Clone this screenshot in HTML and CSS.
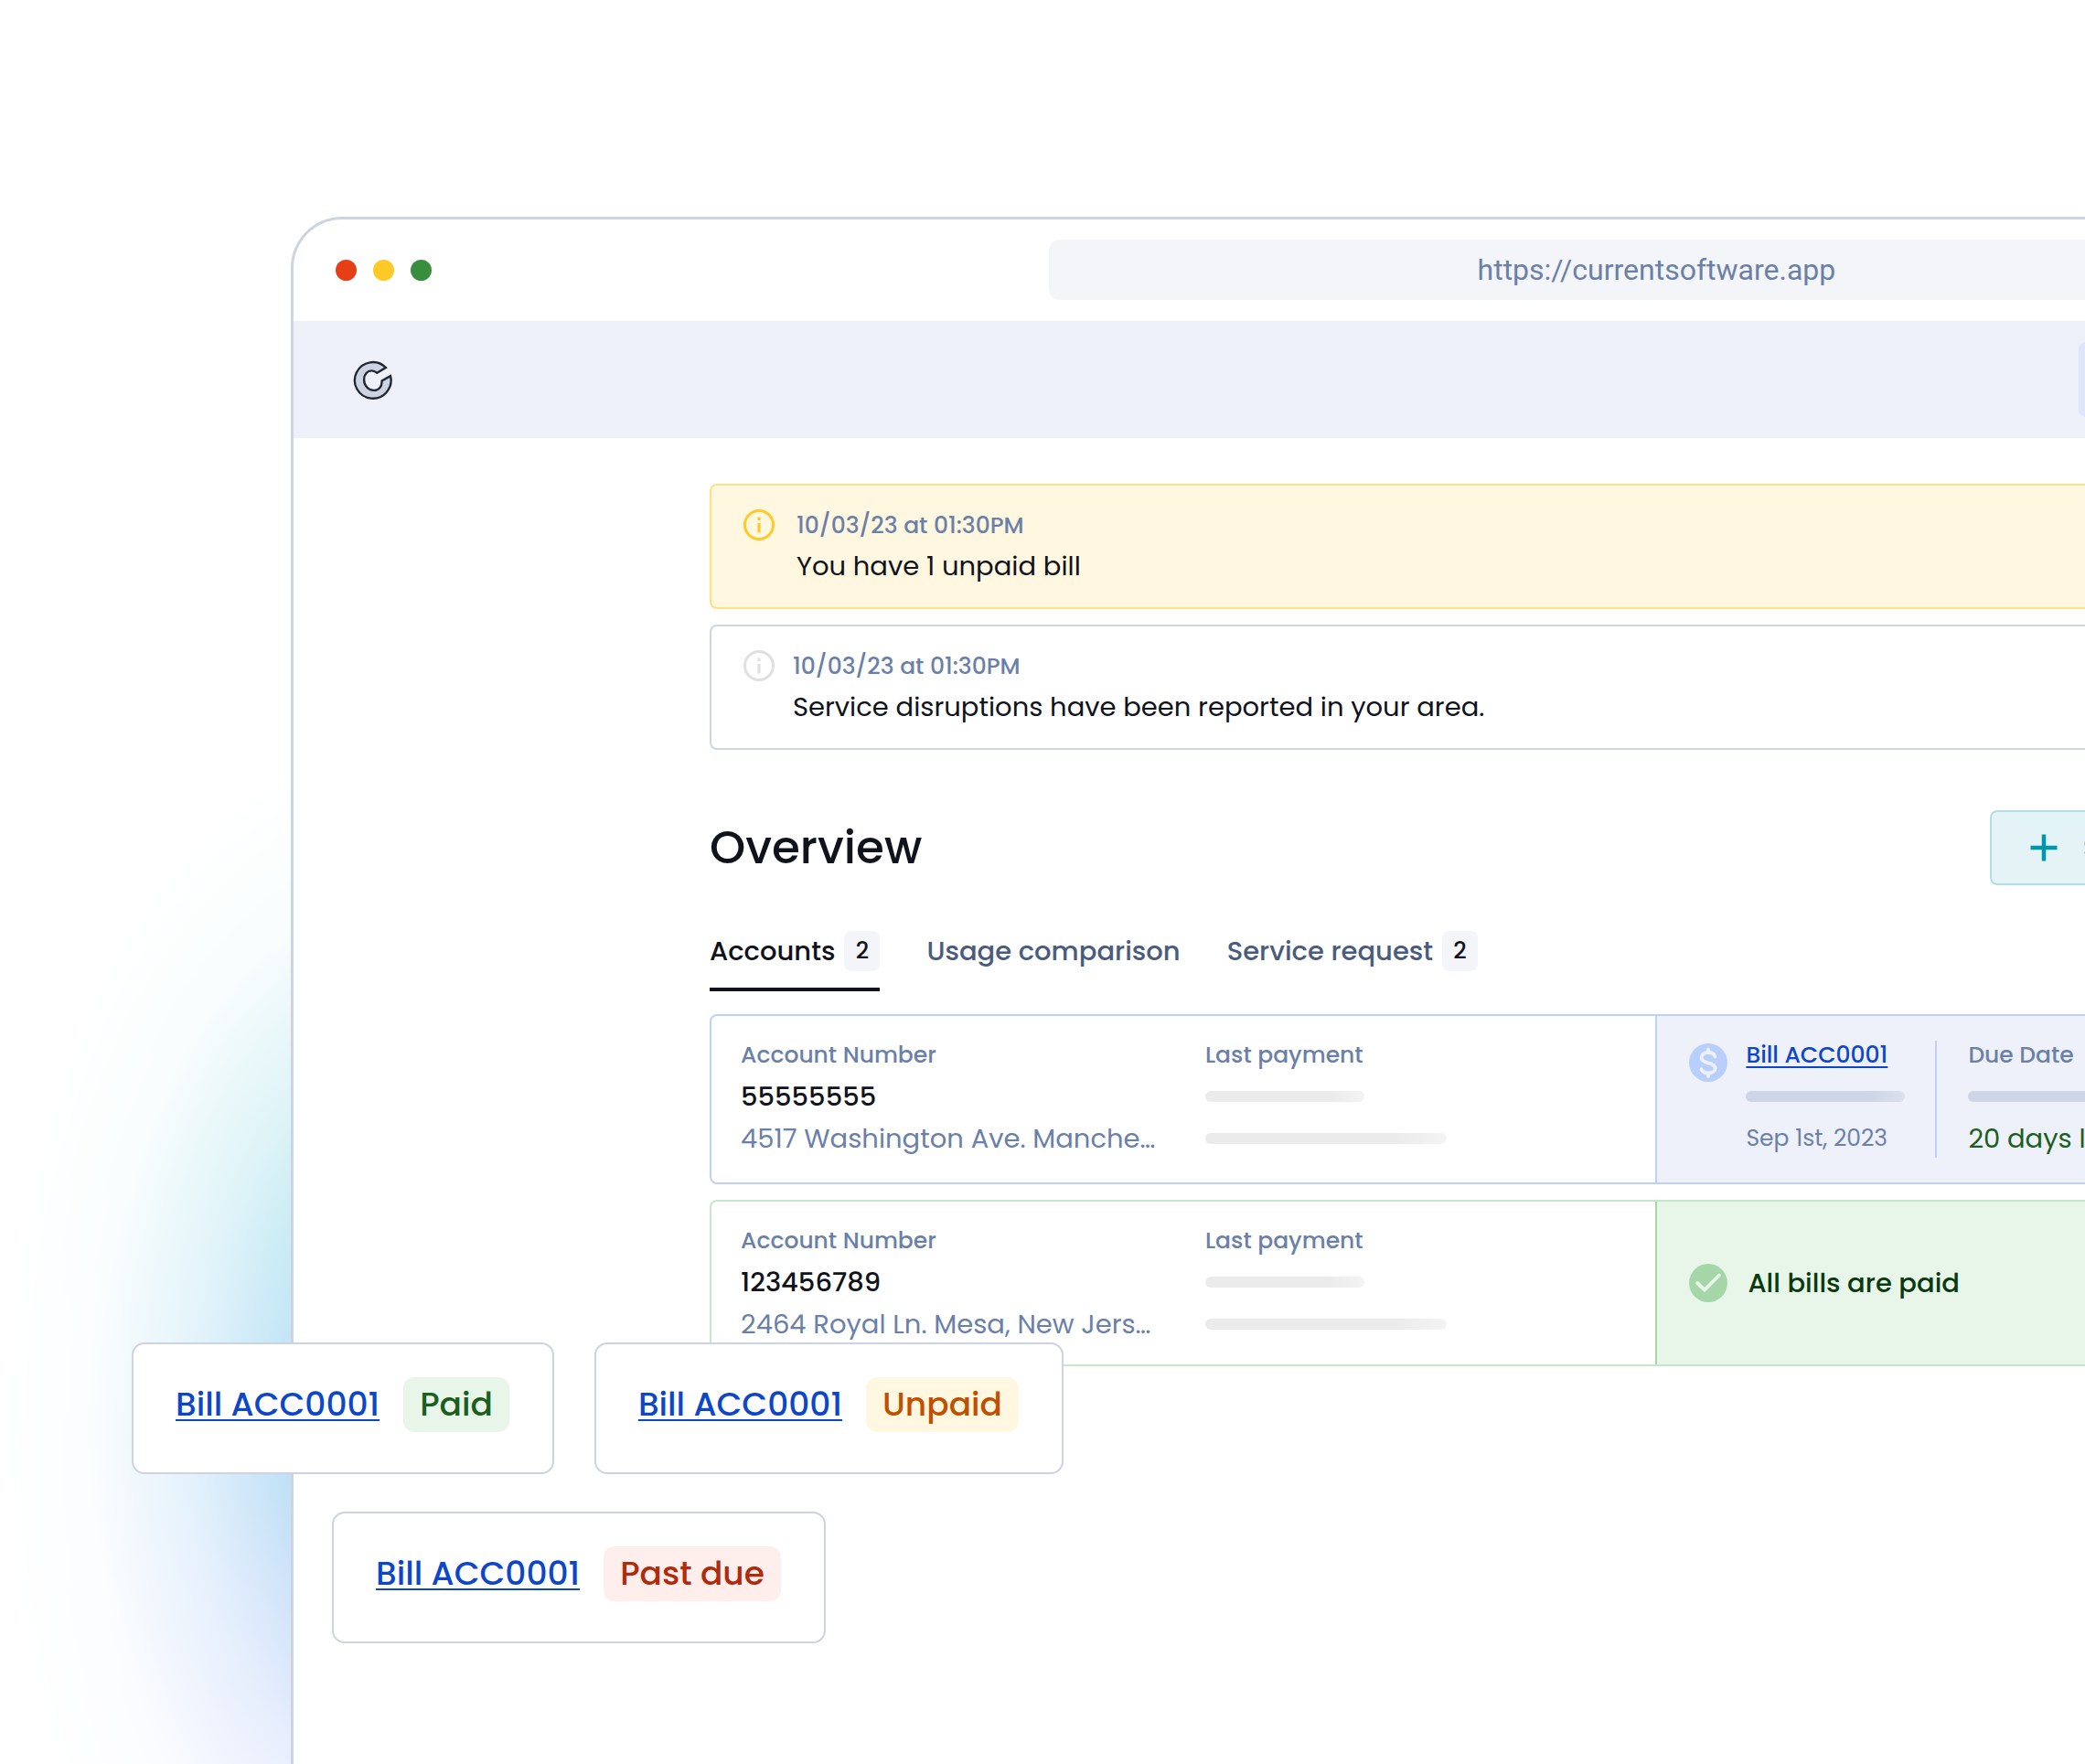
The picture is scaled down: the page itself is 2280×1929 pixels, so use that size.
FILE: index.html
```html
<!DOCTYPE html>
<html lang="en">
<head>
<meta charset="utf-8">
<meta name="viewport" content="width=device-width, initial-scale=1">
<title>Current – Overview</title>
<link rel="stylesheet" href="styles.css">
</head>
<body>
<div class="stage">
  <div class="glow"></div>

  <div class="window">
    <div class="chrome">
      <div class="dots">
        <span class="dot dot-red"></span>
        <span class="dot dot-yellow"></span>
        <span class="dot dot-green"></span>
      </div>
      <input class="address" type="text" value="https://currentsoftware.app" aria-label="Address" readonly>
    </div>

    <nav class="nav">
      <a class="logo" href="#" aria-label="Home">
        <svg viewBox="-3 -3 128 128" width="43" height="43" aria-hidden="true">
          <path d="M104 21A59 59 0 1 0 119 48L91 64C92 84 80 95 65 95C47 95 33 80 33 60C33 42 44 31 58 31C65 31 70 34 75 38Z" fill="#cdd3e0" stroke="#1f2733" stroke-width="7"/>
        </svg>
      </a>
      <div class="nav-actions"><button class="nav-button" type="button" aria-label="Menu"></button></div>
    </nav>

    <main class="content">
      <section class="alerts">
        <article class="alert alert-warning">
          <svg class="alert-icon" viewBox="0 0 34 34" aria-hidden="true"><circle cx="17" cy="17" r="15.5" fill="none" stroke="currentColor" stroke-width="3"/><path d="M17 15v10.500M17 8.500v3.500" stroke="currentColor" stroke-width="3.200"/></svg>
          <div>
            <p class="alert-date">10/03/23 at 01:30PM</p>
            <p class="alert-text">You have 1 unpaid bill</p>
          </div>
        </article>
        <article class="alert alert-info">
          <svg class="alert-icon" viewBox="0 0 34 34" aria-hidden="true"><circle cx="17" cy="17" r="15.5" fill="none" stroke="currentColor" stroke-width="3"/><path d="M17 15v10.500M17 8.500v3.500" stroke="currentColor" stroke-width="3.200"/></svg>
          <div>
            <p class="alert-date">10/03/23 at 01:30PM</p>
            <p class="alert-text">Service disruptions have been reported in your area.</p>
          </div>
        </article>
      </section>

      <header class="heading">
        <h1>Overview</h1>
        <div class="heading-actions">
          <button class="start" type="button">
            <svg viewBox="0 0 30 30" width="30" height="30" aria-hidden="true"><path d="M15 0.500v29M0.500 15h29" stroke="currentColor" stroke-width="4.500"/></svg>
            Start service
          </button>
        </div>
      </header>

      <div class="tabs" role="tablist">
        <button class="tab tab-active" type="button" role="tab" aria-selected="true">Accounts <span class="count">2</span></button>
        <button class="tab" type="button" role="tab" aria-selected="false">Usage comparison</button>
        <button class="tab" type="button" role="tab" aria-selected="false">Service request <span class="count">2</span></button>
      </div>

      <section class="accounts">
        <article class="account account-due">
          <div class="account-main">
            <div class="lines">
              <p class="label">Account Number</p>
              <p class="number">55555555</p>
              <p class="street">4517 Washington Ave. Manche…</p>
            </div>
            <div class="lines">
              <p class="label">Last payment</p>
              <div class="slot"><span class="bar bar-short"></span></div>
              <div class="slot"><span class="bar bar-long"></span></div>
            </div>
          </div>
          <div class="bill">
            <svg class="bill-icon" viewBox="0 0 42 42" aria-hidden="true"><circle cx="21" cy="21" r="21" fill="#b8cefb"/><path d="M28.500 14.500C27.500 11.500 24.500 10 21 10C16.500 10 13.500 12.300 13.500 15.500C13.500 19 16.500 20.300 21 21.300C26 22.400 28.700 24 28.700 27.200C28.700 30.300 25.500 32.300 21 32.300C17.500 32.300 14.500 31 13.500 28.300M21 6.500v3M21 33v3" fill="none" stroke="#eef1f9" stroke-width="3.800" stroke-linecap="round"/></svg>
            <div class="lines bill-ref">
              <p class="label"><a class="link" href="#">Bill ACC0001</a></p>
              <div class="slot"><span class="bar bar-short bar-blue"></span></div>
              <p class="date">Sep 1st, 2023</p>
            </div>
            <div class="divider"></div>
            <div class="lines">
              <p class="label">Due Date</p>
              <div class="slot"><span class="bar bar-long bar-blue"></span></div>
              <p class="left">20 days left</p>
            </div>
          </div>
        </article>

        <article class="account account-paid">
          <div class="account-main">
            <div class="lines">
              <p class="label">Account Number</p>
              <p class="number">123456789</p>
              <p class="street">2464 Royal Ln. Mesa, New Jers…</p>
            </div>
            <div class="lines">
              <p class="label">Last payment</p>
              <div class="slot"><span class="bar bar-short"></span></div>
              <div class="slot"><span class="bar bar-long"></span></div>
            </div>
          </div>
          <div class="bill">
            <svg class="bill-icon" viewBox="0 0 42 42" aria-hidden="true"><circle cx="21" cy="21" r="21" fill="#a5d6a7"/><path d="M9 21L17 28.500L33 12.500" fill="none" stroke="#e8f5e9" stroke-width="3.800" stroke-linecap="round" stroke-linejoin="miter"/></svg>
            <p class="all-paid">All bills are paid</p>
          </div>
        </article>
      </section>
    </main>
  </div>

  <div class="statuses">
    <div class="status-row">
      <div class="status"><a class="link" href="#">Bill ACC0001</a><span class="pill pill-paid">Paid</span></div>
      <div class="status"><a class="link" href="#">Bill ACC0001</a><span class="pill pill-unpaid">Unpaid</span></div>
    </div>
    <div class="status-row status-row-indent">
      <div class="status"><a class="link" href="#">Bill ACC0001</a><span class="pill pill-late">Past due</span></div>
    </div>
  </div>
</div>
</body>
</html>
```
FILE: styles.css
```css
* {
  box-sizing: border-box;
}

body {
  margin: 0;
  background: #fff;
  color: #10131c;
  font-family: Poppins, Inter, "Liberation Sans", sans-serif;
  font-size: 29px;
}

h1,
p {
  margin: 0;
}

button {
  border: 0;
  background: none;
  padding: 0;
  color: inherit;
  font: inherit;
}

.stage {
  position: relative;
  display: flex;
  min-height: 100vh;
  padding: 237px 0 0 318px;
  overflow: hidden;
}

/* Soft colour wash behind the window's left edge */
.glow {
  position: absolute;
  left: 0;
  top: 800px;
  width: 880px;
  height: 1520px;
  background: linear-gradient(#8ad6e0 20%, #94dae7 32%, #a4d9f1 42%, #a4d2f3 54%, #aecff6 62%, #b0c6f8 72%);
  mask-image: radial-gradient(closest-side, rgba(0, 0, 0, 0.95) 0%, rgba(0, 0, 0, 0.7) 28%, rgba(0, 0, 0, 0.3) 53%, rgba(0, 0, 0, 0.05) 77%, transparent 100%);
}

.window {
  position: relative;
  flex: none;
  width: 131vw;
  border: 3px solid #cdd3e2;
  border-bottom: 0;
  border-radius: 56px 56px 0 0;
  background: #fff;
  overflow: hidden;
}

.chrome {
  display: grid;
  grid-template-columns: 1fr 46% 1fr;
  align-items: center;
  height: 111px;
  padding: 0 46px;
}

.dots {
  display: flex;
  gap: 18px;
}

.dot {
  width: 23px;
  height: 23px;
  border-radius: 50%;
}

.dot-red {
  background: #e63f17;
}

.dot-yellow {
  background: #ffca28;
}

.dot-green {
  background: #388e3c;
}

.address {
  width: 100%;
  height: 66px;
  margin: 0 0 2px;
  border: 0;
  border-radius: 12px;
  background: #f3f5f9;
  color: #6b80a8;
  font-family: Roboto, sans-serif;
  font-size: 32px;
  text-align: center;
}

.nav {
  display: flex;
  align-items: center;
  justify-content: space-between;
  height: 128px;
  padding-left: 65px;
  background: #eef1f9;
}

.logo {
  display: flex;
}

.nav-actions {
  width: 1029px;
}

.nav-button {
  display: block;
  width: 82px;
  height: 82px;
  border-radius: 8px;
  background: #dfe5fa;
}

.content {
  padding: 50px 457px 0 455px;
}

.alerts,
.accounts {
  display: flex;
  flex-direction: column;
  gap: 17px;
}

.alert {
  display: flex;
  gap: 24px;
  padding: 21px 35px 22px;
  border: 2px solid #cdd5e3;
  border-radius: 8px;
  line-height: 45px;
}

.alert-warning {
  border-color: #ffe082;
  background: #fff7df;
}

.alert-info {
  gap: 20px;
}

.alert-icon {
  width: 34px;
  height: 34px;
  margin-top: 5px;
  color: #ffca28;
}

.alert-info .alert-icon {
  color: #e0e0e0;
}

.alert-date {
  color: #6b80a8;
  font-size: 25px;
  font-weight: 500;
}

.heading {
  display: flex;
  align-items: center;
  justify-content: space-between;
  margin-top: 66px;
}

h1 {
  font-size: 50px;
  font-weight: 500;
  line-height: 82px;
}

.heading-actions {
  width: 669px;
}

.start {
  display: flex;
  align-items: center;
  gap: 28px;
  height: 82px;
  padding: 0 42px;
  border: 2px solid #b2dfe6;
  border-radius: 8px;
  background: #e3f3f6;
  color: #0097ab;
  font-weight: 500;
}

.tabs {
  display: flex;
  gap: 51px;
  margin-top: 50px;
}

.tab {
  display: flex;
  align-items: center;
  gap: 10px;
  height: 66px;
  padding-bottom: 18px;
  border-bottom: 4px solid transparent;
  color: #4a5c7e;
  font-weight: 500;
}

.tab-active {
  border-color: #10131c;
  color: #10131c;
}

.count {
  width: 39px;
  border-radius: 8px;
  background: #f3f5f9;
  color: #10131c;
  font-size: 25px;
  line-height: 44px;
}

.accounts {
  margin-top: 25px;
}

.account {
  display: grid;
  grid-template-columns: 1fr 1fr;
  border: 2px solid #bdd1fa;
  border-radius: 8px;
  overflow: hidden;
}

.account-main {
  display: grid;
  grid-template-columns: minmax(0, 508px) 1fr;
  padding: 20px 0 25px 32px;
}

.lines {
  line-height: 46px;
}

.label {
  color: #6b80a8;
  font-size: 25px;
  font-weight: 500;
  line-height: 45px;
}

.number {
  font-weight: 500;
}

.street {
  color: #6b80a8;
}

.slot {
  display: flex;
  align-items: center;
  height: 46px;
}

.bar {
  height: 12px;
  border-radius: 6px;
  background: linear-gradient(90deg, #ebebeb 78%, #f4f4f4);
}

.bar-short {
  width: 174px;
}

.bar-long {
  width: 264px;
}

.bar-blue {
  background: linear-gradient(90deg, #cdd5e6 78%, #dbe1ec);
}

.bill {
  display: flex;
  padding: 20px 0 25px 35px;
  border-left: 2px solid #bdd1fa;
  background: #eef1f9;
}

.bill-icon {
  flex: none;
  width: 42px;
  height: 42px;
  margin: 10px 20px 0 0;
}

.link {
  color: #0d47c8;
  font-weight: 500;
  text-decoration-thickness: 2px;
  text-underline-offset: 4px;
}

.bill-ref {
  width: 207px;
}

.date {
  color: #6b80a8;
  font-size: 25px;
}

.divider {
  width: 2px;
  margin: 7px 34px 2px 0;
  background: #bdd1fa;
}

.left {
  color: #1b5e20;
}

.account-paid {
  border-color: #c8e6c9;
}

.account-paid .account-main {
  padding-bottom: 21px;
}

.account-paid .bill {
  align-items: center;
  padding-block: 0;
  border-color: #a5d6a7;
  background: #e8f5e9;
}

.account-paid .bill-icon {
  margin-top: 0;
  margin-right: 22px;
}

.all-paid {
  color: #0a3a10;
  font-weight: 500;
}

/* Status cards float over the window */
.statuses {
  position: absolute;
  left: 144px;
  top: 1468px;
  display: flex;
  flex-direction: column;
  gap: 41px;
}

.status-row {
  display: flex;
  gap: 44px;
}

.status-row-indent {
  padding-left: 219px;
}

.status {
  display: flex;
  gap: 26px;
  padding: 36px 47px 44px 46px;
  border: 2px solid #cdd3e2;
  border-radius: 14px;
  background: #fff;
  font-size: 36px;
  line-height: 60px;
}

.pill {
  padding: 0 18px;
  border-radius: 12px;
  font-weight: 500;
}

.pill-paid {
  background: #e8f5e9;
  color: #1b5e20;
}

.pill-unpaid {
  background: #fff7df;
  color: #bf5000;
}

.pill-late {
  background: #feeeec;
  color: #b02a0c;
}
```
